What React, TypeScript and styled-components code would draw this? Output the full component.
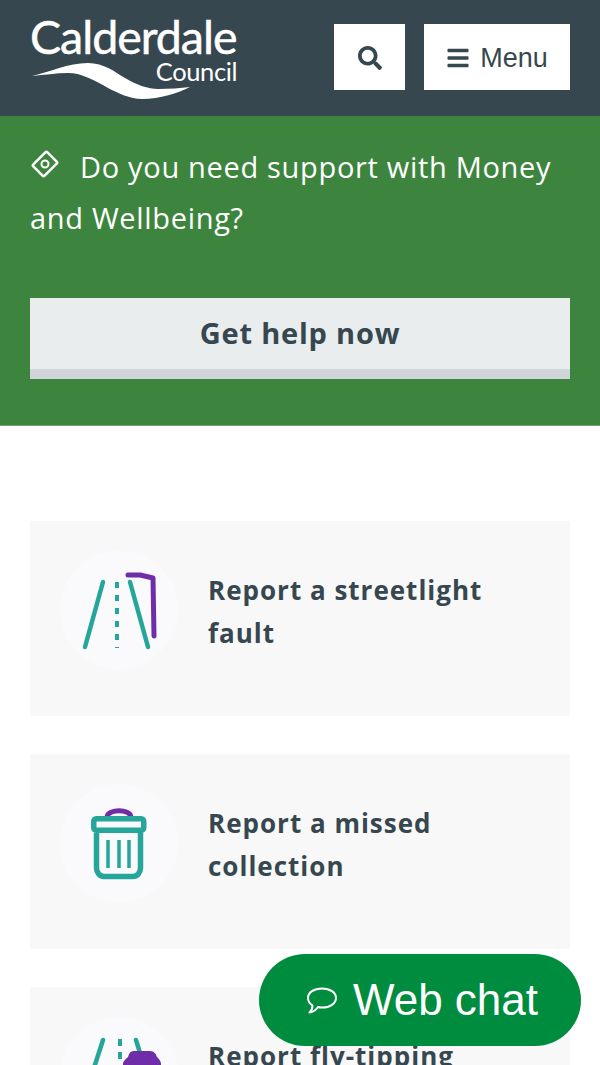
import React from 'react';
import styled, { createGlobalStyle } from 'styled-components';
import { FaBars, FaSearch } from 'react-icons/fa';

type Task = {
  label: string;
  icon: React.ReactNode;
};

const GlobalStyle = createGlobalStyle`
  html, body {
    margin: 0;
    height: 1065px;
    overflow: hidden;
    background: #fff;
    font-family: 'Open Sans', sans-serif;
  }
`;

const Header = styled.header`
  display: flex;
  align-items: flex-start;
  justify-content: space-between;
  height: 116px;
  padding: 24px 30px 0;
  box-sizing: border-box;
  background: #37474f;
`;

const Logo = styled.div`
  position: relative;
  width: 208px;
  height: 84px;
  margin-top: -13px;
  color: #fff;
  font-family: Lato, sans-serif;
`;

const LogoName = styled.div`
  font-size: 46.5px;
  line-height: 50px;
  letter-spacing: -1px;
  white-space: nowrap;
  -webkit-text-stroke: 0.5px #fff;
`;

const LogoSub = styled.div`
  position: absolute;
  right: 1px;
  top: 50px;
  font-size: 25.5px;
  line-height: 20px;
  letter-spacing: -0.4px;
`;

const LogoWave = styled.svg`
  position: absolute;
  left: 0;
  top: 49px;
`;

const HeaderActions = styled.div`
  display: flex;
  gap: 19px;
`;

const HeaderButton = styled.button<{ $width: number }>`
  display: flex;
  align-items: center;
  justify-content: center;
  gap: 10px;
  width: ${(props) => props.$width}px;
  height: 66px;
  padding: 2px 0 0;
  border: 0;
  background: #fff;
  color: #37474f;
  font-family: 'Liberation Sans', sans-serif;
  font-size: 27px;
`;

const Banner = styled.section`
  height: 310px;
  padding: 25px 30px 0;
  box-sizing: border-box;
  background: #3d853e;
  border-bottom: 1px solid #6ea36f;
`;

const BannerText = styled.p`
  margin: 0 0 55px;
  color: #fff;
  font-size: 29px;
  font-weight: 400;
  letter-spacing: 0.68px;
  line-height: 51px;
`;

const MoneyIcon = styled.svg`
  margin-right: 20px;
  vertical-align: -1px;
`;

const HelpButton = styled.a`
  display: block;
  height: 81px;
  box-sizing: border-box;
  border-bottom: 10px solid #cfd5d8;
  background: #e9edee;
  color: #37474f;
  font-size: 29px;
  font-weight: 700;
  letter-spacing: 0.8px;
  line-height: 70px;
  text-align: center;
`;

const TaskList = styled.div`
  display: flex;
  flex-direction: column;
  gap: 38px;
  padding: 95px 30px 0;
`;

const TaskCard = styled.a`
  display: flex;
  align-items: flex-start;
  gap: 30px;
  height: 195px;
  padding: 30px;
  box-sizing: border-box;
  flex-shrink: 0;
  background: #f8f8f8;
`;

const TaskCircle = styled.div`
  display: flex;
  align-items: center;
  justify-content: center;
  flex-shrink: 0;
  width: 118px;
  height: 118px;
  border-radius: 50%;
  background: #fafafc;
`;

const TaskLabel = styled.div`
  padding-top: 18px;
  color: #37474f;
  font-size: 26px;
  font-weight: 700;
  letter-spacing: 1px;
  line-height: 43px;
`;

const ChatButton = styled.button`
  position: fixed;
  left: 259px;
  top: 954px;
  display: flex;
  align-items: center;
  justify-content: center;
  gap: 15px;
  width: 322px;
  height: 92px;
  padding: 0 0 0 4px;
  border: 0;
  border-radius: 46px;
  background: #008c3f;
  color: #fff;
  font-family: 'Liberation Sans', sans-serif;
  font-size: 44px;
`;

const RoadIcon = () => (
  <svg width="90" height="90" viewBox="0 0 90 90" fill="none" strokeWidth="4.5" strokeLinecap="round">
    <path d="M29 17 L11 82 M56 17 L74 82" stroke="#26a69a" />
    <path d="M43 17 V83" stroke="#26a69a" strokeWidth="4" strokeDasharray="6 7" strokeLinecap="butt" />
    <path d="M54 10 H66 L79 13 L80 71" stroke="#6f2da8" strokeWidth="5" strokeLinejoin="round" />
  </svg>
);

const BinIcon = () => (
  <svg width="56" height="74" viewBox="0 0 56 74" fill="none">
    <path d="M16 11 C17 2.5 39 2.5 40 11" stroke="#6f2da8" strokeWidth="5" />
    <rect x="2.75" y="12.75" width="50" height="11.5" rx="2.5" stroke="#26a69a" strokeWidth="5.5" />
    <path d="M5.5 27 V62 C5.5 67 9 70.5 13 70.5 H42 C46 70.5 49.5 67 49.5 62 V27" stroke="#26a69a" strokeWidth="5.5" />
    <path d="M17 34 V62 M28 34 V62 M38 34 V62" stroke="#26a69a" strokeWidth="3.5" />
  </svg>
);

const FlyTipIcon = () => (
  <svg width="90" height="90" viewBox="0 0 90 90" fill="none" strokeWidth="4.5" strokeLinecap="round">
    <path d="M29 9 L8 74 M62 9 L82 74" stroke="#26a69a" />
    <path d="M46 8 V74" stroke="#26a69a" strokeWidth="4" strokeDasharray="7 6" strokeLinecap="butt" />
    <path
      d="M60 20 H76 C80 20 82 23 83 26 C85 28 87 30 87 33 V60 H49 V33 C49 30 52 28 54 26 C55 23 56 20 60 20 Z"
      fill="#6f2da8"
      stroke="none"
    />
  </svg>
);

const tasks: Task[] = [
  { label: 'Report a streetlight fault', icon: <RoadIcon /> },
  { label: 'Report a missed collection', icon: <BinIcon /> },
  { label: 'Report fly-tipping', icon: <FlyTipIcon /> },
];

const App = () => (
  <>
    <GlobalStyle />
    <Header>
      <Logo>
        <LogoName>Calderdale</LogoName>
        <LogoSub>Council</LogoSub>
        <LogoWave width="162" height="42" viewBox="0 0 162 42">
          <path
            d="M2 16 C20 12 38 3 58 3 C74 3 85 12 95 18 C107 25 118 29 128 29 C140 29 150 28 160 27 C148 33 130 39 112 39 C100 39 88 33 78 28 C66 21 52 13 38 13 C26 13 14 15 2 16 Z"
            fill="#fff"
          />
        </LogoWave>
      </Logo>
      <HeaderActions>
        <HeaderButton $width={71} aria-label="Search">
          <FaSearch size={24} />
        </HeaderButton>
        <HeaderButton $width={146}>
          <FaBars size={24} />
          Menu
        </HeaderButton>
      </HeaderActions>
    </Header>
    <Banner>
      <BannerText>
        <MoneyIcon width="30" height="30" viewBox="0 0 30 30" fill="none" stroke="#fff">
          <rect x="5" y="7" width="20" height="16" rx="1.5" strokeWidth="2.5" transform="rotate(-45 15 15)" />
          <circle cx="15" cy="15" r="3.5" strokeWidth="2" />
        </MoneyIcon>
        Do you need support with Money and Wellbeing?
      </BannerText>
      <HelpButton>Get help now</HelpButton>
    </Banner>
    <TaskList>
      {tasks.map((task) => (
        <TaskCard key={task.label}>
          <TaskCircle>{task.icon}</TaskCircle>
          <TaskLabel>{task.label}</TaskLabel>
        </TaskCard>
      ))}
    </TaskList>
    <ChatButton>
      <svg width="32" height="27" viewBox="0 0 32 27" fill="none" stroke="#fff" strokeWidth="2" strokeLinejoin="round">
        <path d="M16 1.5 C24 1.5 30 5.5 30 11 C30 16.5 24 20.5 16 20.5 C14.5 20.5 13 20.4 12 20 C10 23 7 25 3.5 25.5 C5.5 23.5 6.5 21 6.5 18.5 C3.5 16.5 2 14 2 11 C2 5.5 8 1.5 16 1.5 Z" />
      </svg>
      Web chat
    </ChatButton>
  </>
);

export default App;
